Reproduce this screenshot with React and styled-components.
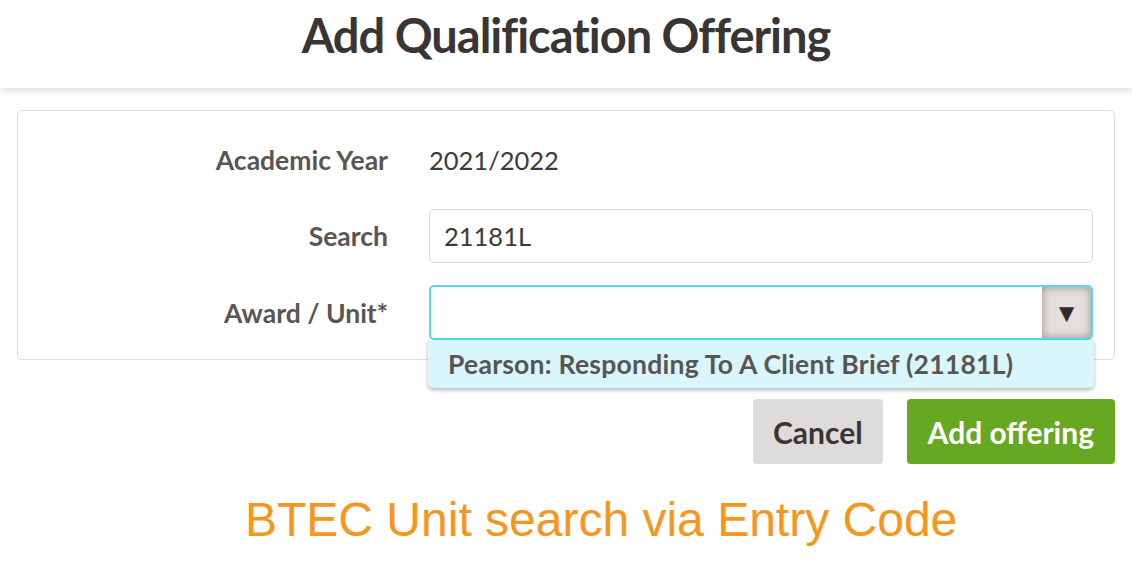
import { createGlobalStyle, styled } from "styled-components";

const GlobalStyle = createGlobalStyle`
  body {
    margin: 0;
    background: #fff;
    font-family: Lato, "Noto Sans", sans-serif;
  }
`;

const App = () => {
  return (
    <>
      <GlobalStyle />
      <Header>
        <Title>Add Qualification Offering</Title>
      </Header>
      <Panel>
        <Row>
          <Label>Academic Year</Label>
          <Value>2021/2022</Value>
        </Row>
        <Row>
          <Label>Search</Label>
          <Input defaultValue="21181L" />
        </Row>
        <Row>
          <Label>Award / Unit*</Label>
          <SelectWrap>
            <SelectBox>
              <ArrowBox>▼</ArrowBox>
            </SelectBox>
            <Dropdown>Pearson: Responding To A Client Brief (21181L)</Dropdown>
          </SelectWrap>
        </Row>
      </Panel>
      <Actions>
        <Button>Cancel</Button>
        <Button $primary>Add offering</Button>
      </Actions>
      <Caption>BTEC Unit search via Entry Code</Caption>
    </>
  );
};

const Header = styled.div`
  height: 88px;
  display: flex;
  justify-content: center;
  align-items: center;
  background: #fff;
  box-shadow: 0 3px 7px rgba(0, 0, 0, 0.13);
  position: relative;
`;

const Title = styled.h1`
  margin: 0 0 18px;
  font-size: 47px;
  font-weight: 700;
  color: #3a3534;
  letter-spacing: -1px;
`;

const Panel = styled.div`
  margin: 22px 17px 0;
  border: 1px solid #dcdcdc;
  border-radius: 5px;
  padding: 22px 21px 20px 0;
  display: flex;
  flex-direction: column;
  gap: 22px;
`;

const Row = styled.div`
  display: grid;
  grid-template-columns: 370px 1fr;
  column-gap: 41px;
  align-items: center;
  height: 54px;
`;

const Label = styled.div`
  text-align: right;
  font-size: 26.5px;
  font-weight: 700;
  color: #5a5553;
`;

const Value = styled.div`
  font-size: 25.5px;
  color: #3e3a38;
`;

const Input = styled.input`
  box-sizing: border-box;
  width: 100%;
  height: 54px;
  border: 1px solid #d9d9d9;
  border-radius: 5px;
  padding: 0 14px;
  font-family: inherit;
  font-size: 25.5px;
  color: #3e3a38;
  outline: none;
`;

const SelectWrap = styled.div`
  position: relative;
`;

const SelectBox = styled.div`
  box-sizing: border-box;
  height: 55px;
  border: 2px solid #58d8f3;
  border-radius: 5px;
  display: flex;
  justify-content: flex-end;
  overflow: hidden;
`;

const ArrowBox = styled.div`
  width: 49px;
  display: flex;
  align-items: center;
  justify-content: center;
  background: #e2dfdc;
  box-shadow: inset 0 0 10px #98938f;
  color: #2f2c2b;
  font-size: 26px;
`;

const Dropdown = styled.div`
  position: absolute;
  left: -1px;
  right: -1px;
  top: 55px;
  height: 48px;
  box-sizing: border-box;
  padding-left: 20px;
  display: flex;
  align-items: center;
  background: #d8f6fc;
  border-radius: 0 0 5px 5px;
  box-shadow: 0 2px 4px rgba(0, 0, 0, 0.3);
  font-size: 26.5px;
  font-weight: 700;
  letter-spacing: 0.25px;
  color: #5a5553;
`;

const Actions = styled.div`
  display: flex;
  justify-content: flex-end;
  gap: 24px;
  margin: 39px 17px 0;
`;

const Button = styled.button`
  height: 65px;
  padding: 0 ${(p) => (p.$primary ? "21px" : "20px")};
  border: none;
  border-radius: 4px;
  font-family: inherit;
  font-size: 30px;
  font-weight: 700;
  background: ${(p) => (p.$primary ? "#67a823" : "#dedcdb")};
  color: ${(p) => (p.$primary ? "#fff" : "#3a3534")};
`;

const Caption = styled.div`
  margin-top: 28px;
  padding-left: 245px;
  font-family: "Liberation Sans", Arial, sans-serif;
  font-size: 48px;
  color: #f7961c;
`;

export default App;
